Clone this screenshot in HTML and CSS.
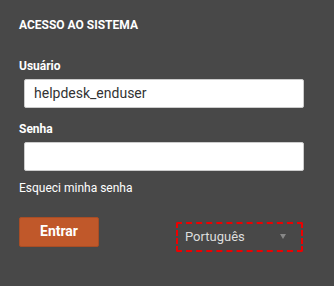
FILE: index.html
```html
<!DOCTYPE html>
<html lang="pt">
<head>
<meta charset="utf-8">
<link rel="stylesheet" href="styles.css">
</head>
<body>
<div class="panel">
  <h1 class="title">ACESSO AO SISTEMA</h1>
  <label class="label">Usuário</label>
  <div class="field">helpdesk_enduser</div>
  <label class="label label-pass">Senha</label>
  <div class="field"></div>
  <div class="forgot">Esqueci minha senha</div>
  <div class="actions">
    <button class="btn">Entrar</button>
    <div class="lang">
      <span class="lang-text">Português</span>
      <span class="arrow"></span>
    </div>
  </div>
</div>
</body>
</html>
```
FILE: styles.css
```css
html, body {
  margin: 0;
  padding: 0;
  background: #484848;
  height: 100%;
}
.panel {
  font-family: Roboto, "Liberation Sans", sans-serif;
  padding: 17px 0 0 19px;
  display: flex;
  flex-direction: column;
  align-items: flex-start;
}
.title {
  margin: 0;
  font-size: 12px;
  font-weight: 700;
  color: #fff;
  letter-spacing: 0;
  line-height: 16px;
}
.label {
  margin-top: 25px;
  font-size: 12px;
  font-weight: 700;
  color: #fff;
  line-height: 16px;
}
.label-pass {
  margin-top: 13px;
}
.field {
  box-sizing: border-box;
  margin-top: 5px;
  margin-left: 5px;
  width: 280px;
  height: 29px;
  background: #fff;
  border: 1px solid #ccc;
  border-radius: 2px;
  font-size: 14px;
  color: #333;
  line-height: 27px;
  padding-left: 9px;
}
.forgot {
  margin-top: 9px;
  font-size: 12px;
  color: #fff;
  line-height: 16px;
}
.actions {
  margin-top: 21px;
  display: flex;
  align-items: flex-start;
}
.btn {
  box-sizing: border-box;
  width: 80px;
  height: 30px;
  background: #c0582a;
  border: 1px solid #a84d25;
  border-radius: 2px;
  color: #fff;
  font-family: Roboto, "Liberation Sans", sans-serif;
  font-weight: 700;
  font-size: 14px;
  padding: 0;
  padding-bottom: 2px;
}
.lang {
  box-sizing: border-box;
  margin-left: 77px;
  margin-top: 5px;
  width: 127px;
  height: 30px;
  border: 2px dashed #e00;
  border-radius: 2px;
  display: flex;
  align-items: center;
  justify-content: space-between;
  padding: 0 15px 2px 7px;
}
.lang-text {
  font-size: 13px;
  color: #ddd;
}
.arrow {
  width: 0;
  height: 0;
  border-left: 3px solid transparent;
  border-right: 3px solid transparent;
  border-top: 5px solid #888;
}
```
